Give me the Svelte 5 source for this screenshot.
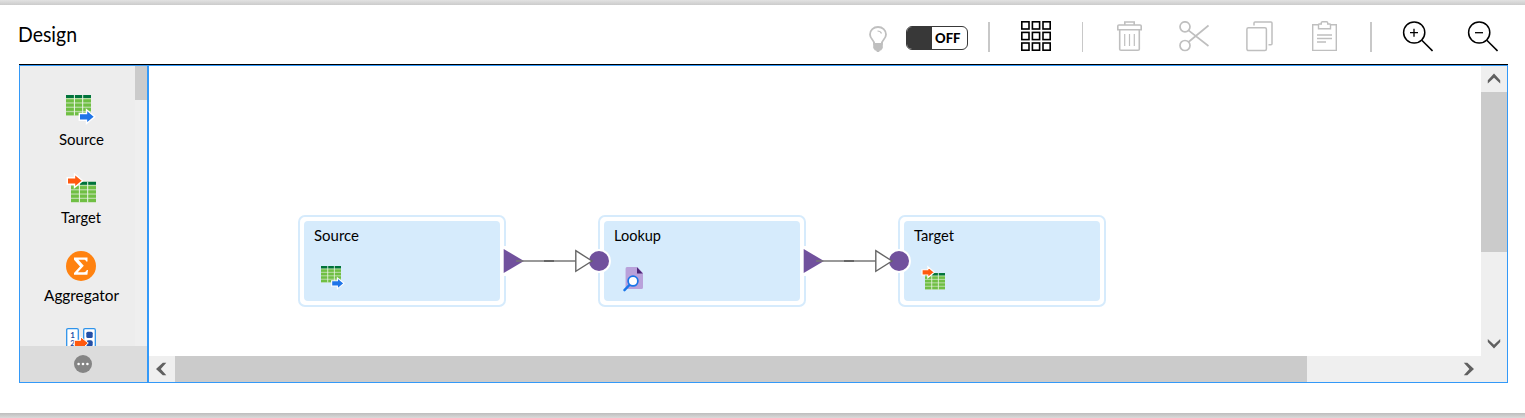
<script>
  const nodes = [
    { label: 'Source', kind: 'source', x: 298, out: true, into: false, w: 45 },
    { label: 'Lookup', kind: 'lookup', x: 598, out: true, into: true, w: 47 },
    { label: 'Target', kind: 'target', x: 898, out: false, into: true, w: 40 }
  ];
  const palette = [
    { label: 'Source', kind: 'source', w: 45 },
    { label: 'Target', kind: 'target', w: 40 },
    { label: 'Aggregator', kind: 'sum', w: 75 }
  ];
  const rows = [4.3, 8.6, 12.9, 17.2];
</script>

{#snippet table(x, y)}
  <g transform="translate({x} {y})">
    <rect width="25" height="20.7" fill="#b6dba2" />
    <rect width="25" height="3" fill="#00733b" />
    {#each rows as r}<rect y={r} width="25" height="3" fill="#70bf44" />{/each}
    <path d="M8.4 0V20.7M16.7 0V20.7" stroke="#eef6ea" stroke-width="1" />
  </g>
{/snippet}

{#snippet glyph(kind, size)}
  <svg class="glyph {kind}" width={size} height={size} viewBox="0 0 30 30">
    {#if kind === 'source'}
      {@render table(0, 0)}
      <path d="M13.3 18.5H20.5V14.8L28.7 21.7L20.5 28.6V25.2H13.3Z" fill="#1f75e8" stroke="#fff" stroke-width="1.4" />
    {:else if kind === 'target'}
      {@render table(5, 8.8)}
      <path d="M1.3 4.7H8.5V1L16.6 7.8L8.5 14.6V11.3H1.3Z" fill="#ff590f" stroke="#fff" stroke-width="1.4" />
    {:else if kind === 'sum'}
      <circle cx="15" cy="15" r="15" fill="#ff8210" />
      <path d="M8 6.5H21.5V10.5H20.2C19.8 9.2 19 8.8 17.5 8.8H12.4L17.8 14.7L11.8 21.2H18C19.5 21.2 20.2 20.4 20.7 19H22L21.4 23.7H8V22L14 15.4L8 8.7Z" fill="#fff" />
    {:else}
      <path d="M4 0H17.8L25 7.6V25.5Q25 27.5 23 27.5H6Q3.2 27.5 3.2 25V2.2Q3.2 0 5 0Z" fill="#b9a1da" />
      <path d="M17.5 0.4L24.7 8H17.5Z" fill="#4b2476" />
      <path d="M7.7 22.8L1.8 29" stroke="#1976e9" stroke-width="3" stroke-linecap="round" />
      <circle cx="12.5" cy="17.6" r="6.1" fill="#fff" stroke="#1976e9" stroke-width="2.2" />
    {/if}
  </svg>
{/snippet}

{#snippet word(text, w)}
  <svg class="word" width={w} height="22"><text x="0" y="16" textLength={w} lengthAdjust="spacingAndGlyphs">{text}</text></svg>
{/snippet}

<main class="page">
  <div class="edge top"></div>
  <header>
    <h1><svg width="64" height="34"><text x="0" y="21" textLength="59" lengthAdjust="spacingAndGlyphs">Design</text></svg></h1>
    <div class="tools">
      <svg class="bulb" width="18" height="27" viewBox="0 0 18 27">
        <path d="M5.3 18C5.3 14 1 13 1 8.5C1 4 4.5 1 9 1S17 4 17 8.5C17 13 12.7 14 12.7 18Z" fill="none" stroke="#bfbfbf" stroke-width="1.8" />
        <path d="M8.5 5Q11.5 5 12.5 7.5" fill="none" stroke="#bfbfbf" stroke-width="1.2" />
        <path d="M4.2 17H13.8V22L12 24.5H11L10 26H8L7 24.5H6L4.2 22Z" fill="#bfbfbf" />
      </svg>
      <div class="toggle"><span class="knob"></span><svg width="30" height="22"><text x="1" y="16" textLength="25.5" lengthAdjust="spacingAndGlyphs">OFF</text></svg></div>
      <i class="sep s1"></i>
      <svg class="grid" width="30" height="30" viewBox="0 0 30 30" fill="none" stroke="#000" stroke-width="1.6">
        {#each [0, 10.6, 21.2] as gy}
          {#each [0, 10.6, 21.2] as gx}<rect x={gx + 0.8} y={gy + 0.8} width="7.2" height="7.2" />{/each}
        {/each}
      </svg>
      <i class="sep s2"></i>
      <svg class="trash" width="25" height="30" viewBox="0 0 25 30" fill="none" stroke="#bfbfbf" stroke-width="1.6">
        <path d="M7.8 4V1H17.2V4M.8 5Q.8 4 2 4H23Q24.2 4 24.2 5V8.7H.8ZM2.7 9V28.2Q2.7 29.2 4 29.2H21Q22.3 29.2 22.3 28.2V9" />
        <path d="M7.7 13V25M12.5 13V25M17.3 13V25" stroke-width="1.2" />
      </svg>
      <svg class="cut" width="30" height="31" viewBox="0 0 30 31" fill="none" stroke="#bfbfbf" stroke-width="1.7">
        <circle cx="6" cy="5.8" r="5" /><circle cx="6" cy="24.5" r="5" />
        <path d="M9.5 9.3L29.5 25M9.5 21L29.5 4.5" />
      </svg>
      <svg class="copy" width="27" height="31" viewBox="0 0 27 31" fill="none" stroke="#bfbfbf" stroke-width="1.5">
        <rect x=".9" y="6.8" width="19.5" height="22.8" rx="1.5" />
        <path d="M8 4.5V2Q8 1 9 1H25Q26 1 26 2V22.7Q26 23.7 25 23.7H22.5" />
      </svg>
      <svg class="clip" width="25" height="31" viewBox="0 0 25 31" fill="none" stroke="#bfbfbf" stroke-width="1.4">
        <path d="M6 3.8H.7V29.4H24.3V3.8H19M6.5 7.8V3.7Q6.5 3 7.5 3H9.3V1.8Q9.3 .8 10.5 .8H14.5Q15.7 .8 15.7 1.8V3H17.5Q18.5 3 18.5 3.7V7.8Z" />
        <path d="M5 14H20M5 17.5H20M5 21H14" />
      </svg>
      <i class="sep s3"></i>
      {#each ['M12 7.7V15.7M8 11.7H16', 'M8 11.7H16'] as mark, i}
        <svg class="zoom z{i}" width="31" height="31" viewBox="0 0 31 31" fill="none" stroke="#000">
          <circle cx="12.2" cy="11.5" r="10.6" stroke-width="1.5" />
          <path d="M19.8 19.2L30.5 29.9" stroke-width="1.5" />
          <path d={mark} stroke-width="1.3" />
        </svg>
      {/each}
    </div>
  </header>

  <section class="panel">
    <aside>
      <div class="list">
        <div class="items">
          {#each palette as p}
            <div class="item">{@render glyph(p.kind, 30)}{@render word(p.label, p.w)}</div>
          {/each}
          <div class="item">
            <svg class="glyph" width="30" height="19" viewBox="0 0 30 19">
              <g fill="#fff" stroke="#2f93ea" stroke-width="1.3"><path d="M.7 19V2Q.7 .7 2 .7H11Q12.3 .7 12.3 2V19" /><path d="M17.7 19V2Q17.7 .7 19 .7H28Q29.3 .7 29.3 2V19" /></g>
              <text class="num" x="4.2" y="9.5">1</text><text class="num" x="4.2" y="17.8">2</text>
              <rect x="20.3" y="3.7" width="6.4" height="6.2" rx="1.5" fill="#234fa6" /><rect x="20.3" y="12.2" width="6.4" height="6.2" rx="2" fill="#234fa6" />
              <path d="M8.3 12.3H14.5V8.8L22.3 15L18 19H8.3Z" fill="#ff590f" stroke="#fff" />
            </svg>
          </div>
        </div>
        <div class="track"><span></span></div>
      </div>
      <div class="more"><svg width="18" height="18"><circle cx="9" cy="9" r="9" fill="#858585" /><g fill="#fff"><circle cx="4.6" cy="9" r="1.3" /><circle cx="9" cy="9" r="1.3" /><circle cx="13.4" cy="9" r="1.3" /></g></svg></div>
    </aside>
    <div class="work">
      <div class="upper">
        <div class="canvas">
          {#each nodes as n}
            <div class="node" style="left:{n.x - 149}px">
              <div class="body">
                {@render word(n.label, n.w)}
                {@render glyph(n.kind, 24)}
              </div>
            </div>
          {/each}
          <svg class="links" width="1332" height="290" viewBox="149 66 1332 290">
            {#each nodes as n}
              {#if n.out}<rect x={n.x + 204} y="246" width="5" height="30" fill="#fff" />{/if}
              {#if n.into}<circle cx={n.x + 1} cy="261" r="12" fill="#fff" /><circle cx={n.x + 1} cy="261" r="10" fill="#71519d" />{/if}
            {/each}
            {#each nodes as n}
              {#if n.out}
                <path d="M{n.x + 205.7} 249L{n.x + 226} 261L{n.x + 205.7} 273Z" fill="#71519d" />
                <path d="M{n.x + 218} 261H{n.x + 278}" stroke="#777" stroke-width="1.6" />
                <path d="M{n.x + 246} 261H{n.x + 256}" stroke="#666" stroke-width="2" />
                <path d="M{n.x + 277.8} 250.7L{n.x + 294} 261L{n.x + 277.8} 271.3Z" fill="#fff" stroke="#666" stroke-width="1.4" />
              {/if}
            {/each}
          </svg>
        </div>
        <div class="vbar">
          <svg width="26" height="26"><path d="M6.8 14.3L13 7.4L19.2 14.3V17.5L13 11.7L6.8 17.5Z" fill="#606060" /></svg>
          <span class="vthumb"></span>
          <svg class="down" width="26" height="26"><path d="M6.8 9L13 14.7L19.2 9V12.1L13 18.5L6.8 12.1Z" fill="#606060" /></svg>
        </div>
      </div>
      <div class="hbar">
        <svg width="26" height="26"><path d="M13.8 6.8L7 13L13.8 19.2H17.3L11.8 13L17.3 6.8Z" fill="#606060" /></svg>
        <span class="hthumb"></span>
        <svg class="right" width="26" height="26"><path d="M8.8 6.8H12.3L19 13L12.3 19.2H8.8L14.4 13Z" fill="#606060" /></svg>
      </div>
    </div>
  </section>
  <div class="edge bottom"></div>
</main>

<style>
  :global(body) { margin: 0; background: #fff; }
  * { box-sizing: border-box; }
  svg { display: block; flex: none; }
  .page { height: 418px; display: flex; flex-direction: column; font-family: Lato, sans-serif; overflow: hidden; }
  .edge { height: 5px; flex: none; }
  .top { background: linear-gradient(#e2e2e2, #cbcbcb); }
  .bottom { margin-top: auto; background: linear-gradient(#bdbdbd, #dadada); }
  header { height: 60px; margin: 0 17px 0 19px; flex: none; display: flex; justify-content: space-between; border-bottom: 1px solid #000; }
  h1 { margin: 16px 0 0 -1px; font-weight: 400; font-size: 21px; }
  h1 svg { overflow: visible; }
  .tools { display: flex; align-items: flex-start; padding: 16px 10px 0 0; }
  .bulb { margin-top: 5px; }
  .toggle { margin: 5px 20px 0 19px; width: 62px; height: 24px; border: 1px solid #383838; border-radius: 6px; display: flex; overflow: hidden; font-weight: 900; font-size: 14px; }
  .knob { width: 25px; background: #383838; margin-right: 2px; }
  .sep { width: 2px; height: 30px; background: #c8c8c8; margin-top: 1px; }
  .grid { margin: 0 31px; }
  .s2 { width: 1px; }
  .trash { margin-left: 34px; }
  .cut { margin-left: 37px; }
  .copy { margin-left: 37px; }
  .clip { margin-left: 39px; }
  .s3 { margin-left: 33px; }
  .z0 { margin-left: 30px; }
  .z1 { margin-left: 34px; }
  .panel { width: 1489px; height: 318px; margin-left: 19px; flex: none; border: 1px solid #3399f8; display: flex; }
  aside { width: 129px; flex: none; border-right: 2px solid #3399f8; display: flex; flex-direction: column; }
  .list { height: 280px; display: flex; overflow: hidden; background: #ededed; }
  .items { width: 115px; padding-top: 29px; padding-left: 7px; }
  .item { height: 78px; display: flex; flex-direction: column; align-items: center; }
  .item:last-child { padding-top: 0; margin-top: -1px; }
  .item .word { margin-top: 4px; }
  .track { flex: 1; background: #efefef; }
  .track span { display: block; height: 34px; background: #cbcbcb; }
  .word { font-size: 15px; overflow: visible; }
  .num { font-size: 8px; font-weight: 700; fill: #234fa6; }
  .glyph { overflow: visible; }
  .more { flex: 1; background: #dcdcdc; display: flex; align-items: center; justify-content: center; padding-right: 2px; }
  .work { flex: 1; display: flex; flex-direction: column; }
  .upper { height: 290px; display: flex; }
  .canvas { position: relative; flex: 1; }
  .node { position: absolute; top: 149px; width: 208px; height: 92px; border: 2.5px solid #d6ebfc; border-radius: 7px; padding: 4px 4px 4px 3.5px; }
  .body { display: flow-root; height: 80px; border-radius: 4px; background: #d6ebfc; padding: 0 0 0 10.5px; }
  .body .word { margin-top: 4px; }
  .body .glyph { margin: 19px 0 0 7px; }
  .body .lookup { margin: 20px 0 0 9px; }
  .links { position: absolute; left: 0; top: 0; }
  .vbar { width: 26px; background: #efefef; display: flex; flex-direction: column; }
  .vthumb { height: 160px; background: #cbcbcb; }
  .down { margin-top: auto; }
  .hbar { height: 26px; background: #efefef; display: flex; }
  .hthumb { width: 1132px; background: #cbcbcb; }
  .right { margin-left: auto; margin-right: 26px; }
</style>
